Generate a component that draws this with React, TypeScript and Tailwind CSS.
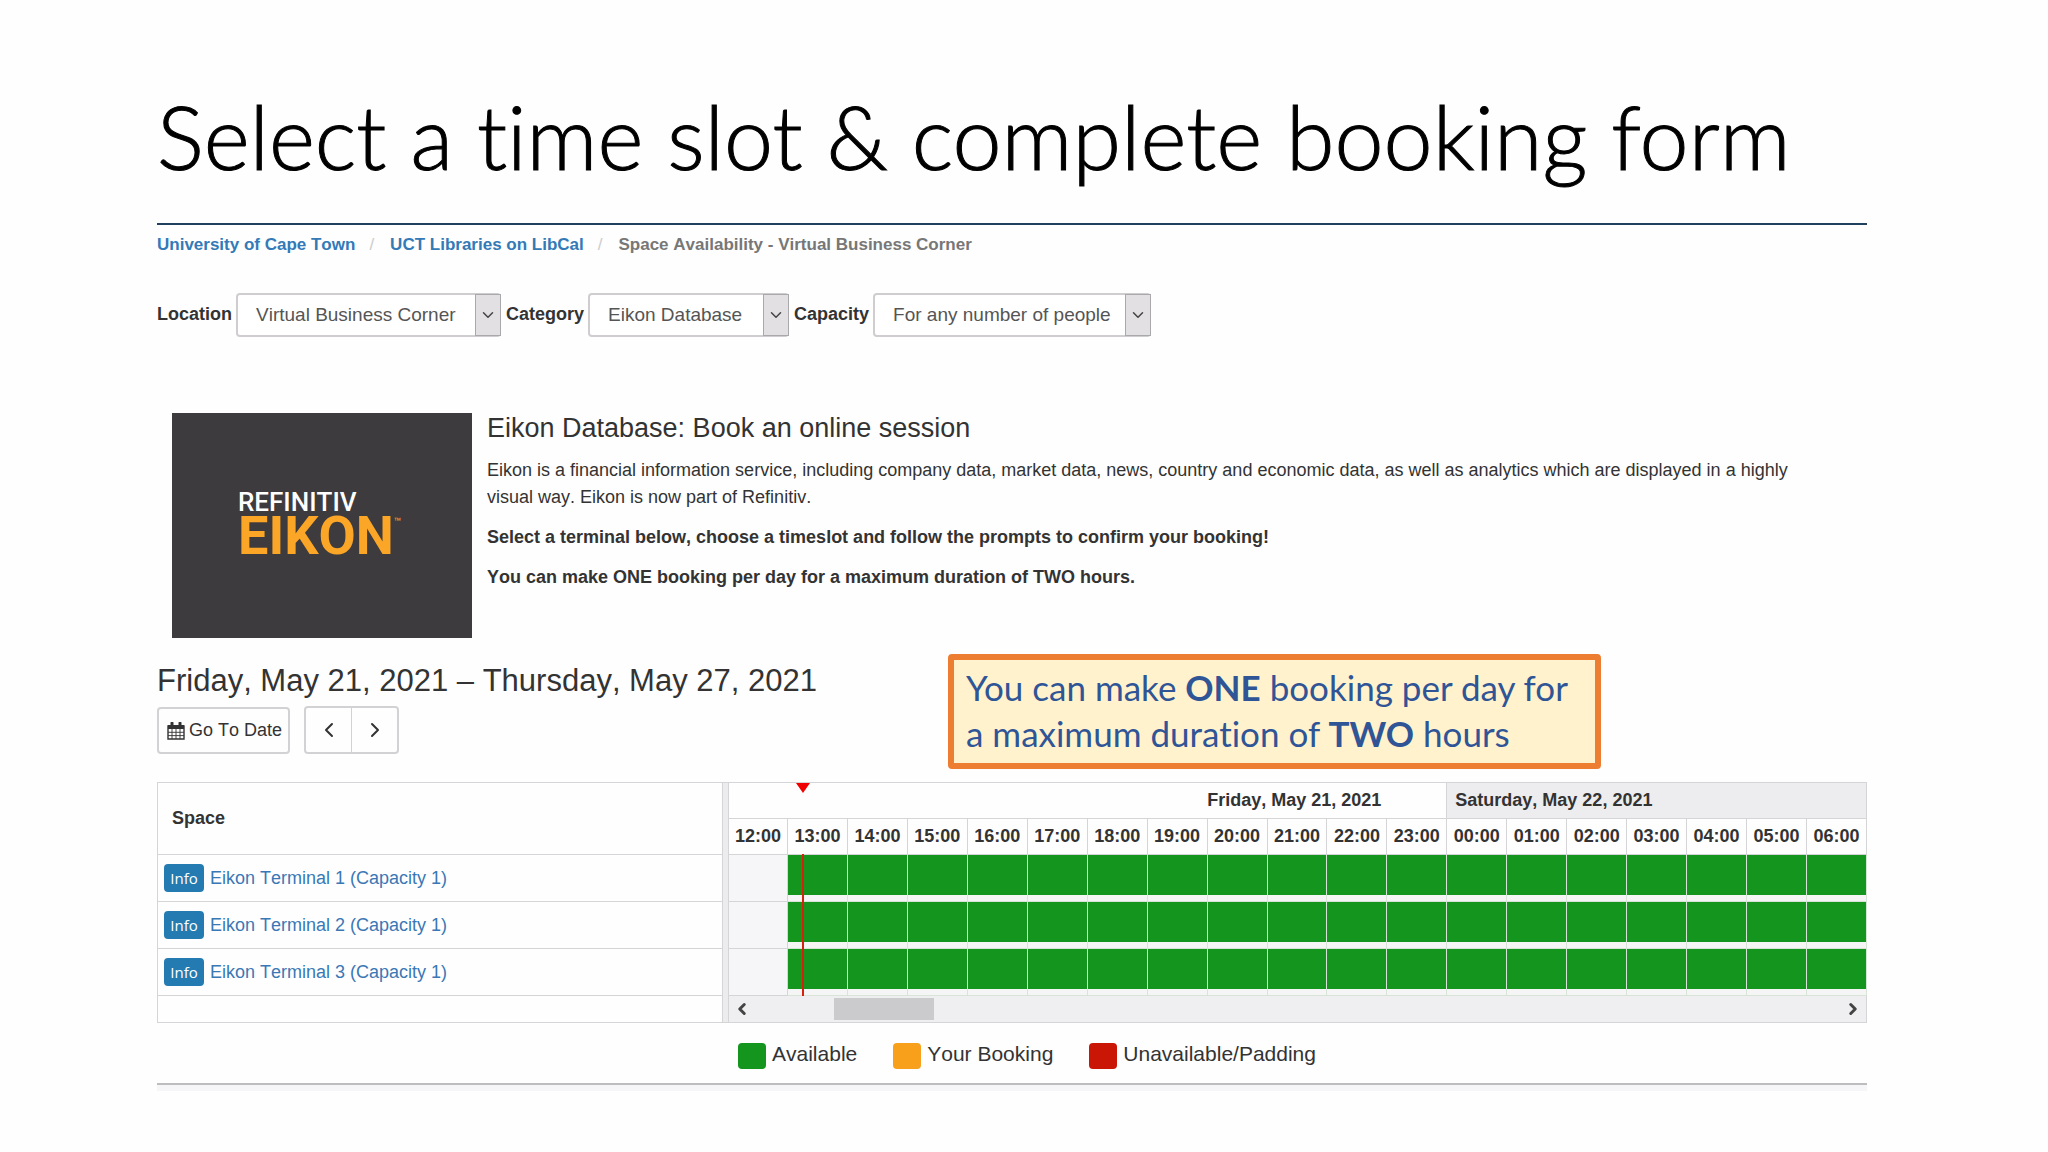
import { ChevronDown, ChevronLeft, ChevronRight } from "lucide-react";

interface FilterSelectProps {
  id: string;
  label: string;
  value: string;
  width: string;
}

const hours = [
  "13:00", "14:00", "15:00", "16:00", "17:00", "18:00", "19:00", "20:00", "21:00",
  "22:00", "23:00", "00:00", "01:00", "02:00", "03:00", "04:00", "05:00", "06:00",
];

const terminals = ["Eikon Terminal 1", "Eikon Terminal 2", "Eikon Terminal 3"];

const legend = [
  { label: "Available", color: "bg-[#14951d]" },
  { label: "Your Booking", color: "bg-[#f89f1b]" },
  { label: "Unavailable/Padding", color: "bg-[#c91605]" },
];

function FilterSelect({ id, label, value, width }: FilterSelectProps) {
  return (
    <div className="flex items-center gap-1">
      <label htmlFor={id} className="pb-0.5 text-[18px] font-bold">
        {label}
      </label>
      <div className={`relative h-11 ${width}`}>
        <select
          id={id}
          className="h-full w-full appearance-none rounded-sm border-2 border-[#cfcdd0] bg-white pl-[18px] text-[19px] text-[#555]"
        >
          <option>{value}</option>
        </select>
        <span className="pointer-events-none absolute inset-y-px right-0 flex w-[26px] items-center justify-center border border-[#a9a8aa] bg-[#e2e0e2]">
          <ChevronDown className="h-[18px] w-[18px] text-[#444]" strokeWidth={2} />
        </span>
      </div>
    </div>
  );
}

function CalendarIcon() {
  return (
    <svg viewBox="0 0 18 18" className="h-[18px] w-[18px]" fill="none" stroke="#333">
      <path d="M1 4h16v13H1z" strokeWidth="1.4" />
      <path d="M1 3h16v4H1z" fill="#333" stroke="none" />
      <path d="M5 1v4M13 1v4" strokeWidth="3" strokeLinecap="round" />
      <path d="M5 7v10M9 7v10M13 7v10M1 10.3h16M1 13.6h16" strokeWidth="0.9" />
    </svg>
  );
}

function EikonLogo() {
  return (
    <div className="flex h-[225px] w-[300px] shrink-0 flex-col bg-[#3d3b3e] pt-[74px] pl-[66px] font-['Roboto',sans-serif]">
      <span className="text-[26px] leading-[30px] font-medium text-white">REFINITIV</span>
      <span className="flex items-start text-[54px] leading-[38px] font-bold text-[#fba626]">
        EIKON
        <span className="text-[12px] leading-[10px] font-normal">™</span>
      </span>
    </div>
  );
}

function AvailabilityGrid() {
  return (
    <table className="w-full table-fixed border-separate border-spacing-0 border-t border-l border-[#d5d4d6] text-[18px]">
      <colgroup>
        <col className="w-[565px]" />
        <col className="w-[6px]" />
        <col className="w-[59px]" />
        {hours.map((h) => (
          <col key={h} />
        ))}
      </colgroup>
      <thead>
        <tr className="h-9">
          <th rowSpan={2} className="border-r border-b border-[#d5d4d6] pl-3.5 text-left">
            Space
          </th>
          <th rowSpan={2} className="border-r border-[#d5d4d6] bg-[#ececee] p-0" />
          <th colSpan={12} className="border-r border-b border-[#d5d4d6] p-0 pr-[65px] text-right">
            Friday, May 21, 2021
          </th>
          <th colSpan={7} className="border-r border-b border-[#d5d4d6] bg-[#ededef] p-0 pl-2 text-left">
            Saturday, May 22, 2021
          </th>
        </tr>
        <tr className="h-9">
          <th className="border-r border-b border-[#d5d4d6] p-0">12:00</th>
          {hours.map((h, i) => (
            <th key={h} className="relative border-r border-b border-[#d5d4d6] p-0">
              {h}
              {i === 0 && (
                <span className="absolute -top-9 left-2 z-10 flex w-[14px] flex-col items-center">
                  <svg viewBox="0 0 14 10" className="h-2.5 w-3.5" fill="#f00000">
                    <path d="M0 0h14L7 10z" />
                  </svg>
                  <span className="mt-[61px] h-[142px] w-0.5 bg-[#d8200f]" />
                </span>
              )}
            </th>
          ))}
        </tr>
      </thead>
      <tbody>
        {terminals.map((name, i) => (
          <tr key={name} className="h-[47px]">
            <td className="border-r border-b border-[#d5d4d6] p-0 pl-1.5">
              <div className="flex items-center gap-1.5">
                <button className="h-7 w-10 rounded-sm bg-[#237bb1] font-['Open_Sans',sans-serif] text-[15px] text-white">
                  Info
                </button>
                <a href="#" className="text-[#3a78b5]">
                  {name} (Capacity 1)
                </a>
              </div>
            </td>
            {i === 0 && <td rowSpan={4} className="border-r border-b border-[#d5d4d6] bg-[#ececee] p-0" />}
            <td className="border-r border-b border-[#d5d4d6] bg-[#f6f5f8] p-0" />
            {hours.map((h) => (
              <td key={h} className="border-r border-b border-[#d9e4d9] bg-[#f6f5f6] p-0 align-top">
                <div className="h-10 bg-[#14951d]" />
              </td>
            ))}
          </tr>
        ))}
        <tr className="h-[27px]">
          <td className="border-r border-b border-[#d5d4d6] p-0" />
          <td colSpan={19} className="border-r border-b border-[#d5d4d6] bg-[#efeef0] p-0">
            <div className="flex items-center justify-between px-1">
              <button aria-label="Scroll left">
                <ChevronLeft className="h-[18px] w-[18px] text-[#444]" strokeWidth={4} />
              </button>
              <div className="flex-1 pl-[83px]">
                <div className="h-[22px] w-[100px] bg-[#cbcacc]" />
              </div>
              <button aria-label="Scroll right">
                <ChevronRight className="h-[18px] w-[18px] text-[#444]" strokeWidth={4} />
              </button>
            </div>
          </td>
        </tr>
      </tbody>
    </table>
  );
}

export default function App() {
  return (
    <main className="min-h-screen bg-[#fefefe] pt-[82px] pr-[181px] pb-10 pl-[157px] font-['Liberation_Sans',Arial,sans-serif] text-[#333] [font-kerning:none]">
      <h1 className="h-[141px] font-['Lato',sans-serif] text-[88px] leading-[108px] font-light whitespace-nowrap text-black [-webkit-text-stroke:1px] [font-kerning:normal] [font-variant-ligatures:none]">
        Select a time slot &amp; complete booking form
      </h1>

      <nav className="flex border-t-2 border-[#20405f] pt-2 text-[17px] leading-6 font-bold">
        <a href="#" className="text-[#337ab7]">University of Cape Town</a>
        <span className="px-4 pl-3.5 font-normal text-[#ccc]">/</span>
        <a href="#" className="text-[#337ab7]">UCT Libraries on LibCal</a>
        <span className="px-4 pl-3.5 font-normal text-[#ccc]">/</span>
        <span className="text-[#777]">Space Availability - Virtual Business Corner</span>
      </nav>

      <form className="mt-9 flex gap-[5px]">
        <FilterSelect id="location" label="Location" value="Virtual Business Corner" width="w-[265px]" />
        <FilterSelect id="category" label="Category" value="Eikon Database" width="w-[201px]" />
        <FilterSelect id="capacity" label="Capacity" value="For any number of people" width="w-[278px]" />
      </form>

      <section className="mt-[76px] flex gap-[15px] pl-[15px]">
        <EikonLogo />
        <div className="pr-10 text-[18px] leading-[27px]">
          <h2 className="text-[27px] leading-[30px]">Eikon Database: Book an online session</h2>
          <p className="mt-3.5">
            Eikon is a financial information service, including company data, market data, news, country and economic
            data, as well as analytics which are displayed in a highly visual way. Eikon is now part of Refinitiv.
          </p>
          <p className="mt-[13px] font-bold">
            Select a terminal below, choose a timeslot and follow the prompts to confirm your booking!
          </p>
          <p className="mt-[13px] font-bold">
            You can make ONE booking per day for a maximum duration of TWO hours.
          </p>
        </div>
      </section>

      <section className="relative mt-6">
        <h2 className="text-[31px] leading-[38px]">Friday, May 21, 2021 – Thursday, May 27, 2021</h2>
        <div className="mt-1.5 flex items-end gap-3.5">
          <button className="flex h-[47px] w-[133px] items-center gap-1 rounded-sm border-2 border-[#d2d1d4] pl-2 text-[18px] whitespace-nowrap">
            <CalendarIcon />
            Go To Date
          </button>
          <div className="flex h-12 w-[95px] rounded-sm border-2 border-[#d2d1d4]">
            <button aria-label="Previous" className="flex flex-1 items-center justify-center border-r border-[#d2d1d4]">
              <ChevronLeft className="h-6 w-6" strokeWidth={2} />
            </button>
            <button aria-label="Next" className="flex flex-1 items-center justify-center">
              <ChevronRight className="h-6 w-6" strokeWidth={2} />
            </button>
          </div>
        </div>
        <p className="absolute -top-2 left-[791px] h-[115px] w-[653px] rounded-sm border-6 border-[#ed7d31] bg-[#fff2cc] pt-1 pl-3 font-['Lato',sans-serif] text-[35px] leading-[46px] whitespace-nowrap text-[#2f5597] [font-kerning:normal] [font-variant-ligatures:none]">
          You can make <strong>ONE</strong> booking per day for
          <br />a maximum duration of <strong>TWO</strong> hours
        </p>
      </section>

      <section className="mt-7">
        <AvailabilityGrid />
        <ul className="mt-5 flex gap-9 pl-[581px] text-[21px] leading-[22px]">
          {legend.map(({ label, color }) => (
            <li key={label} className="flex gap-1.5">
              <span className={`h-[26px] w-7 rounded ${color}`} />
              {label}
            </li>
          ))}
        </ul>
      </section>

      <footer className="mt-3.5 h-2 border-t-2 border-[#bdbcbe] bg-[#f6f5f7]" />
    </main>
  );
}
